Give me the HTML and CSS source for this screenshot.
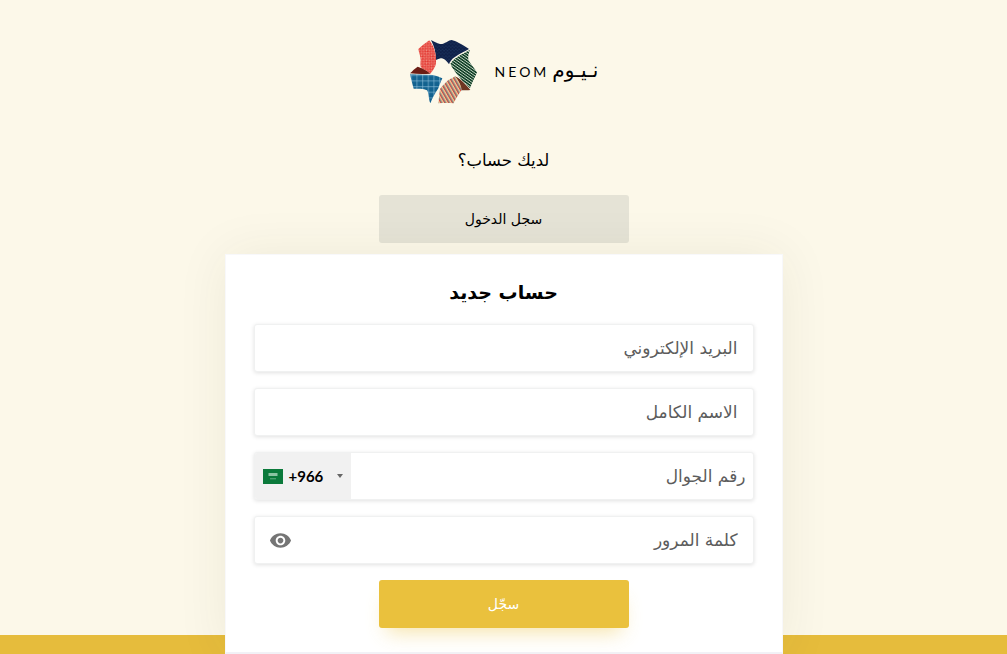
FILE: index.html
```html
<!DOCTYPE html>
<html lang="ar" dir="rtl">
<head>
<meta charset="utf-8">
<title>NEOM</title>
<link rel="stylesheet" href="styles.css">
</head>
<body>
<main class="page">
  <header class="brand" dir="ltr">
    <svg class="brand-mark" viewBox="0 0 240 225" aria-hidden="true">
      <defs>
        <pattern id="p-red" width="7" height="7" patternUnits="userSpaceOnUse" patternTransform="rotate(45)">
          <rect width="7" height="7" fill="#e2352f"/>
          <rect x="0.5" y="0.5" width="2.8" height="2.8" fill="#fbc6b6"/>
          <rect x="4" y="4" width="2.6" height="2.6" fill="#f7a899"/>
        </pattern>
        <pattern id="p-navy" width="10" height="10" patternUnits="userSpaceOnUse">
          <rect width="10" height="10" fill="#0f2048"/>
          <path d="M1 3h3M6 7h3" stroke="#2f5a88" stroke-width="1.6"/>
        </pattern>
        <pattern id="p-green" width="7" height="7" patternUnits="userSpaceOnUse" patternTransform="rotate(35)">
          <rect width="7" height="7" fill="#134029"/>
          <rect width="7" height="2.2" fill="#cfe0cc"/>
        </pattern>
        <pattern id="p-blue" width="17" height="17" patternUnits="userSpaceOnUse">
          <rect width="17" height="17" fill="#12628f"/>
          <path d="M0 2h17M2 0v17" stroke="#8fc2dc" stroke-width="1.8"/>
        </pattern>
        <pattern id="p-multi" width="10" height="10" patternUnits="userSpaceOnUse" patternTransform="rotate(-30)">
          <rect width="10" height="10" fill="#eaa95f"/>
          <rect width="2.5" height="10" fill="#d9483b"/>
          <rect x="3.5" width="2" height="10" fill="#2d6fa8"/>
          <rect x="7" width="2" height="10" fill="#f3dfc4"/>
        </pattern>
      </defs>
      <path fill="url(#p-navy)" d="M78 15C88 20 95 24 105 27C118 29 128 16 140 15C150 17 175 30 192 42C180 50 165 55 150 66C140 72 135 80 132 88C125 78 118 70 107 70C100 72 95 75 92 75C94 55 88 35 78 15Z"/>
      <path fill="url(#p-red)" d="M73 16C60 25 50 33 40 42C42 55 47 65 47 75C46 85 45 95 50 100C60 105 70 110 76 116C85 105 92 95 93 85C95 60 88 35 73 16Z"/>
      <path fill="#6b1d14" d="M15 115C22 108 30 100 38 95C42 97 46 98 50 100C60 105 70 110 76 116C55 117 35 117 15 115Z"/>
      <path fill="url(#p-green)" d="M195 45C190 55 189 65 190 75C198 88 208 100 216 112C210 128 200 145 195 160C185 150 172 138 162 125C152 113 142 100 136 87C145 70 170 58 195 45Z"/>
      <path fill="url(#p-blue)" d="M15 118L84 120C95 122 105 127 112 130C108 140 103 150 100 160C90 175 82 190 76 205C70 190 72 175 66 166C55 160 40 162 26 161C22 147 18 132 15 118Z"/>
      <path fill="url(#p-multi)" d="M130 135C138 132 144 128 150 124C156 128 160 130 165 133C168 145 170 155 170 166C160 178 152 192 146 205C132 204 115 204 100 205C102 190 103 175 105 162C112 152 122 143 130 135Z"/>
      <path fill="#6e3522" d="M150 124C165 130 182 148 196 165C188 166 178 166 170 166C168 150 162 135 150 124Z"/>
    </svg>
    <div class="brand-name">
      <span class="brand-latin">NEOM</span>
      <span class="brand-arabic" lang="ar">نـيـوم</span>
    </div>
  </header>

  <p class="have-account">لديك حساب؟</p>
  <a class="btn btn-muted" href="#">سجل الدخول</a>

  <section class="card">
    <h1 class="card-title">حساب جديد</h1>
    <form class="form">
      <div class="field"><span class="field-label">البريد الإلكتروني</span></div>
      <div class="field"><span class="field-label">الاسم الكامل</span></div>
      <div class="field field-phone">
        <span class="field-label">رقم الجوال</span>
        <div class="dial" dir="ltr">
          <svg class="flag" viewBox="0 0 20 15" aria-hidden="true">
            <rect width="20" height="15" fill="#0b7a3b"/>
            <rect x="5.5" y="4" width="9" height="3" fill="#8cc4a2"/>
            <rect x="7" y="9.5" width="6" height="0.7" fill="#8cc4a2"/>
          </svg>
          <span class="dial-code">+966</span>
          <span class="caret"></span>
        </div>
      </div>
      <div class="field field-password">
        <span class="field-label">كلمة المرور</span>
        <svg class="eye" viewBox="0 0 24 24" aria-hidden="true">
          <path fill="#757575" d="M12 4.5C7 4.5 2.73 7.61 1 12c1.73 4.39 6 7.5 11 7.5s9.27-3.11 11-7.5c-1.73-4.39-6-7.5-11-7.5zM12 17c-2.76 0-5-2.24-5-5s2.24-5 5-5 5 2.24 5 5-2.24 5-5 5zm0-8c-1.66 0-3 1.34-3 3s1.34 3 3 3 3-1.34 3-3-1.34-3-3-3z"/>
        </svg>
      </div>
      <button class="btn btn-primary" type="button">سجّل</button>
    </form>
  </section>
</main>
<footer class="band"></footer>
</body>
</html>
```

FILE: styles.css
```css
* { box-sizing: border-box; }

html, body {
  margin: 0;
  height: 654px;
  overflow: hidden;
}

body {
  background: #fcf8e9;
  font-family: "DejaVu Sans", "Noto Sans", sans-serif;
  color: #000;
}

.page {
  position: relative;
  z-index: 1;
  display: flex;
  flex-direction: column;
  align-items: center;
  padding-top: 39px;
}

.brand {
  display: flex;
  align-items: center;
  gap: 10px;
  height: 66px;
  margin-right: 4px;
}

.brand-mark {
  width: 80px;
  height: 75px;
  flex: none;
  filter: blur(.3px);
}

.brand-name {
  display: flex;
  align-items: center;
  gap: 3px;
  padding-bottom: 2px;
}

.brand-latin {
  font-family: "Lato", sans-serif;
  font-size: 14px;
  letter-spacing: 3px;
}

.brand-arabic {
  padding-bottom: 3px;
  font-size: 20px;
  line-height: 1;
}

.have-account {
  margin: 45px 0 0;
  font-size: 16.5px;
  line-height: 22px;
}

.btn {
  display: flex;
  align-items: center;
  justify-content: center;
  width: 250px;
  height: 48px;
  border: 0;
  border-radius: 3px;
  font: inherit;
  font-size: 14px;
  text-decoration: none;
  color: #000;
}

.btn-muted {
  margin-top: 23px;
  background: #e5e3d6;
}

.btn-primary {
  background: #eac13d;
  color: #fff;
  box-shadow: 0 12px 20px -8px rgba(234, 193, 61, .45);
}

.card {
  width: 558px;
  height: 400px;
  margin-top: 11px;
  padding: 23px 28px 0;
  background: #fff;
  border: 1px solid #f8f8fa;
  border-bottom: 2px solid #f2f1f6;
  box-shadow: 0 0 50px rgba(60, 50, 10, .07);
}

.card-title {
  margin: 0;
  text-align: center;
  font-size: 19px;
  font-weight: 700;
  line-height: 28px;
}

.form {
  display: flex;
  flex-direction: column;
  align-items: center;
  gap: 16px;
  margin-top: 18px;
}

.field {
  display: flex;
  align-items: center;
  justify-content: space-between;
  width: 100%;
  height: 48px;
  padding: 0 15px;
  background: #fff;
  border-radius: 3px;
  border: 1px solid #f0f1f1;
  box-shadow: 0 1px 4px rgba(0, 0, 0, .12);
  overflow: hidden;
}

.field-label {
  font-size: 17px;
  line-height: 42px;
  color: #5c5c5c;
}

.field-phone {
  padding: 0 7px 0 0;
}

.field-password {
  padding-left: 14px;
}

.dial {
  display: flex;
  align-items: center;
  width: 96px;
  height: 100%;
  padding-left: 8px;
  background: #f1f1f1;
}

.flag {
  width: 20px;
  height: 15px;
  flex: none;
}

.dial-code {
  margin-left: 6px;
  font-family: "Lato", sans-serif;
  font-size: 15px;
  font-weight: 700;
}

.caret {
  margin-left: 14px;
  border-top: 4px solid #666;
  border-left: 3px solid transparent;
  border-right: 3px solid transparent;
}

.eye {
  width: 23px;
  height: 23px;
  flex: none;
}

.band {
  height: 19px;
  margin-top: -19px;
  background: #e6bc3c;
}
```
